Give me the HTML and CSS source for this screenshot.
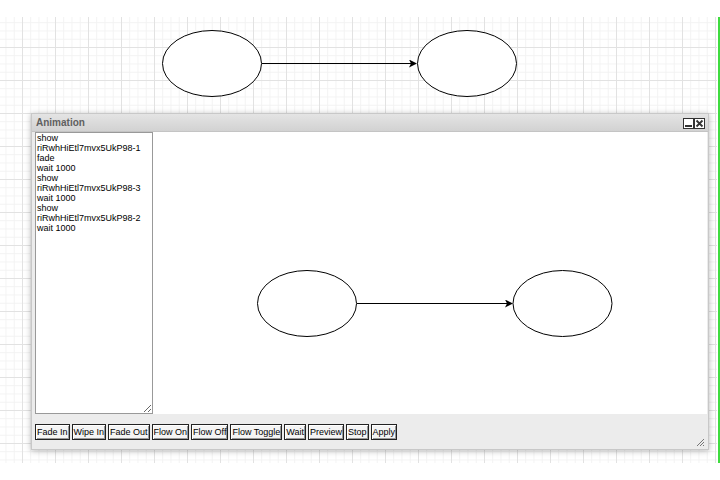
FILE: index.html
```html
<!DOCTYPE html>
<html>
<head>
<meta charset="utf-8">
<link rel="stylesheet" href="styles.css">
</head>
<body>
<div class="canvas">
  <svg class="diagram" width="717" height="446" viewBox="0 17 717 446">
    <defs>
      <marker id="arr" markerWidth="8" markerHeight="8" refX="7" refY="4" orient="auto" markerUnits="userSpaceOnUse">
        <path d="M0,0 L8,4 L0,8 L2,4 Z" fill="#000"/>
      </marker>
    </defs>
    <ellipse cx="212" cy="63.5" rx="49.5" ry="33" fill="#fff" stroke="#000" stroke-width="1"/>
    <ellipse cx="467" cy="63.5" rx="49.5" ry="33" fill="#fff" stroke="#000" stroke-width="1"/>
    <line x1="262" y1="63.5" x2="416" y2="63.5" stroke="#000" stroke-width="1" marker-end="url(#arr)"/>
  </svg>
</div>
<div class="green"></div>

<div class="window">
  <div class="titlebar">
    <span class="title">Animation</span>
    <span class="ctrls">
      <svg width="11" height="11" viewBox="0 0 11 11"><rect x="0.5" y="0.5" width="10" height="10" fill="#fff" stroke="#333"/><rect x="2" y="7" width="7" height="2" fill="#333"/></svg>
      <svg width="11" height="11" viewBox="0 0 11 11"><rect x="0.5" y="0.5" width="10" height="10" fill="#fff" stroke="#333"/><path d="M2.5,2.5 L8.5,8.5 M8.5,2.5 L2.5,8.5" stroke="#333" stroke-width="1.8"/></svg>
    </span>
  </div>
  <div class="body">
    <textarea class="script" spellcheck="false">show
riRwhHiEtl7mvx5UkP98-1
fade
wait 1000
show
riRwhHiEtl7mvx5UkP98-3
wait 1000
show
riRwhHiEtl7mvx5UkP98-2
wait 1000</textarea>
    <div class="preview">
      <svg width="554" height="282" viewBox="153 131 554 282">
        <defs>
          <marker id="arr2" markerWidth="8" markerHeight="8" refX="7" refY="4" orient="auto" markerUnits="userSpaceOnUse">
            <path d="M0,0 L8,4 L0,8 L2,4 Z" fill="#000"/>
          </marker>
        </defs>
        <ellipse cx="307" cy="302.5" rx="49.5" ry="33" fill="#fff" stroke="#000" stroke-width="1"/>
        <ellipse cx="562.5" cy="302.5" rx="49.5" ry="33" fill="#fff" stroke="#000" stroke-width="1"/>
        <line x1="357" y1="302.5" x2="512" y2="302.5" stroke="#000" stroke-width="1" marker-end="url(#arr2)"/>
      </svg>
    </div>
  </div>
  <div class="buttons">
    <button class="btn">Fade In</button>
    <button class="btn">Wipe In</button>
    <button class="btn">Fade Out</button>
    <button class="btn">Flow On</button>
    <button class="btn">Flow Off</button>
    <button class="btn">Flow Toggle</button>
    <button class="btn">Wait</button>
    <button class="btn">Preview</button>
    <button class="btn">Stop</button>
    <button class="btn">Apply</button>
  </div>
  <svg class="grip" width="9" height="9" viewBox="0 0 9 9">
    <path d="M8,1 L1,8 M8,4 L4,8 M8,7 L7,8" stroke="#777" stroke-width="1"/>
  </svg>
</div>
</body>
</html>
```
FILE: styles.css
```css
html, body {
  margin: 0;
  padding: 0;
  background: #fff;
  width: 720px;
  height: 480px;
  overflow: hidden;
  font-family: "Liberation Sans", Arial, sans-serif;
}
.canvas {
  position: absolute;
  left: 0;
  top: 17px;
  width: 717px;
  height: 446px;
  background-color: #fff;
  background-image:
    linear-gradient(to right, #e2e2e2 1px, transparent 1px),
    linear-gradient(to bottom, #e2e2e2 1px, transparent 1px),
    linear-gradient(to right, #f2f2f2 1px, transparent 1px),
    linear-gradient(to bottom, #f2f2f2 1px, transparent 1px);
  background-size: 33px 33px, 33px 33px, 8.25px 8.25px, 8.25px 8.25px;
  background-position: 22px 30px, 22px 30px, 22px 30px, 22px 30px;
}
.diagram {
  display: block;
}
.green {
  position: absolute;
  left: 718px;
  top: 17px;
  width: 2px;
  height: 446px;
  background: #3fdc3f;
}
.window {
  position: absolute;
  left: 31px;
  top: 113px;
  width: 676px;
  height: 335px;
  background: #ececec;
  border: 1px solid #c8c8c8;
  box-shadow: 0 1px 6px rgba(0,0,0,0.28);
  display: flex;
  flex-direction: column;
}
.titlebar {
  height: 17px;
  display: flex;
  align-items: center;
  justify-content: space-between;
  padding: 0 3px 0 4px;
  background: linear-gradient(to bottom, #e4e4e4, #d2d2d2);
  border-bottom: 1px solid #c4c4c4;
}
.title {
  font-size: 10px;
  font-weight: bold;
  color: #606060;
}
.ctrls {
  display: flex;
  gap: 0;
  padding-top: 1px;
}
.ctrls svg {
  display: block;
}
.body {
  display: flex;
  padding: 0 1px 0 3px;
  height: 282px;
}
.script {
  width: 118px;
  height: 282px;
  box-sizing: border-box;
  margin: 0;
  border: 1px solid #999;
  padding: 0 1px;
  font-family: "Liberation Sans", Arial, sans-serif;
  font-size: 9px;
  line-height: 10px;
  color: #000;
  background: #fff;
  resize: both;
  outline: none;
  overflow: hidden;
  white-space: pre;
}
.preview {
  flex: 1;
  background: #fff;
  height: 282px;
  overflow: hidden;
}
.preview svg {
  display: block;
}
.buttons {
  display: flex;
  gap: 2px;
  padding: 10px 0 0 3px;
}
.btn {
  height: 16px;
  margin: 0;
  padding: 0 1px;
  font-family: "Liberation Sans", Arial, sans-serif;
  font-size: 9px;
  line-height: 12px;
  color: #000;
  background: #f4f4f4;
  border: 1px solid #222;
  box-shadow: inset 1px 1px 0 #fff, inset -1px -1px 0 #999;
  border-radius: 0;
}
.grip {
  position: absolute;
  right: 3px;
  bottom: 2px;
}
```
